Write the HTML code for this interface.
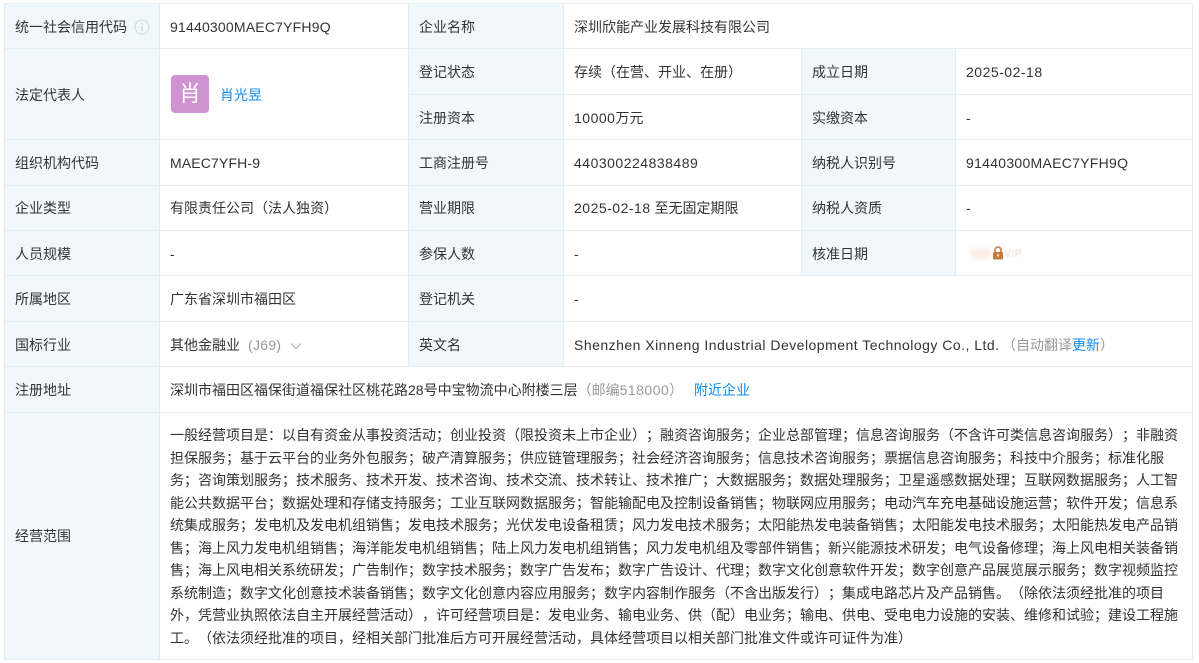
<!DOCTYPE html>
<html lang="zh-CN">
<head>
<meta charset="utf-8">
<title>企业工商信息</title>
<style>
html,body{margin:0;padding:0;background:#fff;}
body{width:1199px;height:663px;position:relative;overflow:hidden;font-family:"Liberation Sans","Noto Sans CJK SC",sans-serif;font-size:14px;color:#333;text-spacing-trim:space-all;font-feature-settings:"palt" 0,"halt" 0,"chws" 0;}
.bg{position:absolute;background:#f1f8fc;}
.h{position:absolute;height:1px;background:#e4edf4;}
.v{position:absolute;width:1px;background:#e4edf4;}
.t{position:absolute;white-space:nowrap;line-height:20px;height:20px;}
.g{color:#999;}
.b{color:#128bed;}
.s{position:absolute;left:170px;white-space:nowrap;line-height:20px;height:20px;font-size:14px;color:#333;}
.n{letter-spacing:.5px;}
</style>
</head>
<body>
<div class="bg" style="left:4px;top:3px;width:155px;height:656px"></div>
<div class="bg" style="left:409px;top:3px;width:155px;height:363px"></div>
<div class="bg" style="left:801px;top:48px;width:155px;height:227px"></div>

<div class="h" style="left:4px;top:3px;width:1189px"></div>
<div class="h" style="left:4px;top:48px;width:1189px"></div>
<div class="h" style="left:409px;top:94px;width:784px"></div>
<div class="h" style="left:4px;top:139px;width:1189px"></div>
<div class="h" style="left:4px;top:185px;width:1189px"></div>
<div class="h" style="left:4px;top:230px;width:1189px"></div>
<div class="h" style="left:4px;top:275px;width:1189px"></div>
<div class="h" style="left:4px;top:321px;width:1189px"></div>
<div class="h" style="left:4px;top:366px;width:1189px"></div>
<div class="h" style="left:4px;top:412px;width:1189px"></div>
<div class="h" style="left:4px;top:659px;width:1189px"></div>

<div class="v" style="left:4px;top:3px;height:656px"></div>
<div class="v" style="left:159px;top:3px;height:656px"></div>
<div class="v" style="left:408px;top:3px;height:363px"></div>
<div class="v" style="left:563px;top:3px;height:363px"></div>
<div class="v" style="left:801px;top:48px;height:227px"></div>
<div class="v" style="left:955px;top:48px;height:227px"></div>
<div class="v" style="left:1192px;top:3px;height:656px"></div>

<div class="t" style="left:15px;top:17px">统一社会信用代码</div>
<svg style="position:absolute;left:134px;top:19px" width="16" height="16" viewBox="0 0 16 16"><circle cx="8" cy="8" r="7" fill="none" stroke="#d6dee5" stroke-width="1.3"/><rect x="7.2" y="7" width="1.6" height="5" fill="#d0d8df"/><rect x="7.2" y="4" width="1.6" height="1.7" fill="#d0d8df"/></svg>
<div class="t" style="left:170px;top:17px;letter-spacing:.2px">91440300MAEC7YFH9Q</div>
<div class="t" style="left:419px;top:17px">企业名称</div>
<div class="t" style="left:574px;top:17px">深圳欣能产业发展科技有限公司</div>

<div class="t" style="left:15px;top:85px">法定代表人</div>
<div style="position:absolute;left:171px;top:75px;width:38px;height:38px;border-radius:4px;background:#cf93d1;color:#fff;font-size:22px;line-height:38px;text-align:center">肖</div>
<div class="t b" style="left:220px;top:85px">肖光昱</div>

<div class="t" style="left:419px;top:62px">登记状态</div>
<div class="t" style="left:574px;top:62px">存续（在营、开业、在册）</div>
<div class="t" style="left:812px;top:62px">成立日期</div>
<div class="t n" style="left:966px;top:62px">2025-02-18</div>

<div class="t" style="left:419px;top:108px">注册资本</div>
<div class="t" style="left:574px;top:108px"><span class="n">10000</span>万元</div>
<div class="t" style="left:812px;top:108px">实缴资本</div>
<div class="t" style="left:966px;top:108px">-</div>

<div class="t" style="left:15px;top:153px">组织机构代码</div>
<div class="t" style="left:170px;top:153px;letter-spacing:.15px">MAEC7YFH-9</div>
<div class="t" style="left:419px;top:153px">工商注册号</div>
<div class="t n" style="left:574px;top:153px">440300224838489</div>
<div class="t" style="left:812px;top:153px">纳税人识别号</div>
<div class="t" style="left:966px;top:153px;letter-spacing:.28px">91440300MAEC7YFH9Q</div>

<div class="t" style="left:15px;top:198px">企业类型</div>
<div class="t" style="left:170px;top:198px">有限责任公司（法人独资）</div>
<div class="t" style="left:419px;top:198px">营业期限</div>
<div class="t" style="left:574px;top:198px"><span class="n">2025-02-18</span> 至无固定期限</div>
<div class="t" style="left:812px;top:198px">纳税人资质</div>
<div class="t" style="left:966px;top:198px">-</div>

<div class="t" style="left:15px;top:244px">人员规模</div>
<div class="t" style="left:170px;top:244px">-</div>
<div class="t" style="left:419px;top:244px">参保人数</div>
<div class="t" style="left:574px;top:244px">-</div>
<div class="t" style="left:812px;top:244px">核准日期</div>
<div style="position:absolute;left:971px;top:249px;width:20px;height:10px;background:#fbeee6;filter:blur(2px)"></div>
<svg style="position:absolute;left:992px;top:246px" width="12" height="14" viewBox="0 0 12 14"><path d="M3 6V4a3 3 0 0 1 6 0v2" fill="none" stroke="#c47a3c" stroke-width="1.6"/><rect x="1" y="6" width="10" height="7.5" rx="1.2" fill="#c47a3c"/><circle cx="6" cy="9.5" r="1.2" fill="#f6e3d2"/></svg>
<div class="t" style="left:1004px;top:244px;font-size:11px;color:#eadcd2;filter:blur(.5px)">VIP</div>

<div class="t" style="left:15px;top:289px">所属地区</div>
<div class="t" style="left:170px;top:289px">广东省深圳市福田区</div>
<div class="t" style="left:419px;top:289px">登记机关</div>
<div class="t" style="left:574px;top:289px">-</div>

<div class="t" style="left:15px;top:335px">国标行业</div>
<div class="t" style="left:170px;top:335px">其他金融业</div>
<div class="t g" style="left:248px;top:335px;letter-spacing:.3px">(J69)</div>
<svg style="position:absolute;left:290px;top:342px" width="12" height="8" viewBox="0 0 12 8"><path d="M1 1.5L6 6.5L11 1.5" fill="none" stroke="#aaa" stroke-width="1"/></svg>
<div class="t" style="left:419px;top:335px">英文名</div>
<div class="t" style="left:574px;top:335px;letter-spacing:.48px">Shenzhen Xinneng Industrial Development Technology Co., Ltd.</div>
<div class="t g" style="left:1002px;top:335px">（自动翻译<span class="b">更新</span>）</div>

<div class="t" style="left:15px;top:380px">注册地址</div>
<div class="t" style="left:170px;top:380px">深圳市福田区福保街道福保社区桃花路28号中宝物流中心附楼三层<span class="g">（邮编<span class="n">518000</span>）</span></div>
<div class="t b" style="left:694px;top:380px">附近企业</div>

<div class="t" style="left:15px;top:526px">经营范围</div>
<div class="s" style="top:425px">一般经营项目是：以自有资金从事投资活动；创业投资（限投资未上市企业）；融资咨询服务；企业总部管理；信息咨询服务（不含许可类信息咨询服务）；非融资</div>
<div class="s" style="top:448px">担保服务；基于云平台的业务外包服务；破产清算服务；供应链管理服务；社会经济咨询服务；信息技术咨询服务；票据信息咨询服务；科技中介服务；标准化服</div>
<div class="s" style="top:470px">务；咨询策划服务；技术服务、技术开发、技术咨询、技术交流、技术转让、技术推广；大数据服务；数据处理服务；卫星遥感数据处理；互联网数据服务；人工智</div>
<div class="s" style="top:493px">能公共数据平台；数据处理和存储支持服务；工业互联网数据服务；智能输配电及控制设备销售；物联网应用服务；电动汽车充电基础设施运营；软件开发；信息系</div>
<div class="s" style="top:515px">统集成服务；发电机及发电机组销售；发电技术服务；光伏发电设备租赁；风力发电技术服务；太阳能热发电装备销售；太阳能发电技术服务；太阳能热发电产品销</div>
<div class="s" style="top:538px">售；海上风力发电机组销售；海洋能发电机组销售；陆上风力发电机组销售；风力发电机组及零部件销售；新兴能源技术研发；电气设备修理；海上风电相关装备销</div>
<div class="s" style="top:560px">售；海上风电相关系统研发；广告制作；数字技术服务；数字广告发布；数字广告设计、代理；数字文化创意软件开发；数字创意产品展览展示服务；数字视频监控</div>
<div class="s" style="top:583px">系统制造；数字文化创意技术装备销售；数字文化创意内容应用服务；数字内容制作服务（不含出版发行）；集成电路芯片及产品销售。（除依法须经批准的项目</div>
<div class="s" style="top:605px">外，凭营业执照依法自主开展经营活动），许可经营项目是：发电业务、输电业务、供（配）电业务；输电、供电、受电电力设施的安装、维修和试验；建设工程施</div>
<div class="s" style="top:628px">工。（依法须经批准的项目，经相关部门批准后方可开展经营活动，具体经营项目以相关部门批准文件或许可证件为准）</div>
</body>
</html>
